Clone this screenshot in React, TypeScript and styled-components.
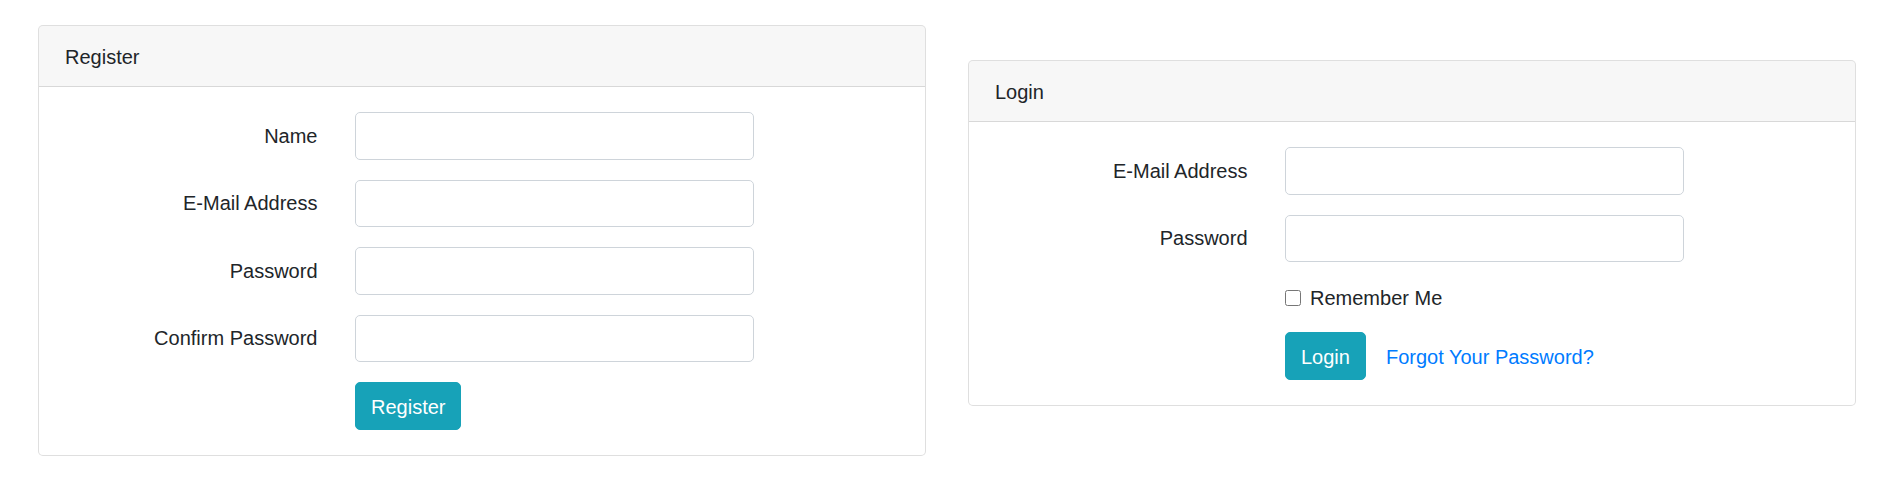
import React, { useState } from "react";
import styled, { createGlobalStyle } from "styled-components";

const GlobalStyle = createGlobalStyle`
  * { box-sizing: border-box; }
  body {
    margin: 0;
    background: #fff;
    color: #212529;
    font-family: "Liberation Sans", Arial, sans-serif;
    font-size: 20px;
    line-height: 1.5;
  }
`;

const Page = styled.div`
  display: flex;
  align-items: flex-start;
  gap: 42px;
  padding: 25px 0 0 38px;
`;

const Card = styled.div<{ $offset?: number }>`
  width: 888px;
  margin-top: ${(p) => p.$offset ?? 0}px;
  border: 1.25px solid rgba(0, 0, 0, 0.125);
  border-radius: 5px;
  background: #fff;
  overflow: hidden;
`;

const CardHeader = styled.div`
  padding: 16px 25px 14px 26px;
  background: rgba(0, 0, 0, 0.03);
  border-bottom: 1.25px solid rgba(0, 0, 0, 0.125);
`;

const CardBody = styled.form`
  padding: 25px;
`;

const Row = styled.div<{ $last?: boolean }>`
  display: grid;
  grid-template-columns: 291px 436.5px;
  margin: 0 -18.75px ${(p) => (p.$last ? 0 : 20)}px;
`;

const Label = styled.label`
  padding: 8.75px 18.75px 7.5px;
  text-align: right;
`;

const Field = styled.div<{ $col?: number }>`
  grid-column: ${(p) => p.$col ?? 2};
  padding: 0 18.75px;
  display: flex;
  align-items: center;
`;

const Input = styled.input`
  width: 100%;
  height: 47.5px;
  padding: 7.5px 15px;
  font: inherit;
  color: #495057;
  border: 1.25px solid #ced4da;
  border-radius: 5px;
  outline: none;
`;

const Check = styled.label`
  display: flex;
  align-items: center;
  gap: 9px;
  height: 30px;
  padding-top: 2px;
  cursor: pointer;

  input {
    width: 16px;
    height: 16px;
    margin: 0;
  }
`;

const Button = styled.button`
  font: inherit;
  color: #fff;
  background: #17a2b8;
  border: 1.25px solid #17a2b8;
  border-radius: 5px;
  padding: 8.5px 15px 6.5px;
  height: 47.5px;
  cursor: pointer;
`;

const LinkButton = styled.a`
  color: #007bff;
  text-decoration: none;
  padding: 8.5px 15px 6.5px;
  margin-left: 5px;
`;

const App: React.FC = () => {
  const [remember, setRemember] = useState(false);

  return (
    <>
      <GlobalStyle />
      <Page>
        <Card>
          <CardHeader>Register</CardHeader>
          <CardBody onSubmit={(e) => e.preventDefault()}>
            {["Name", "E-Mail Address", "Password", "Confirm Password"].map((l) => (
              <Row key={l}>
                <Label>{l}</Label>
                <Field>
                  <Input type={l.includes("Password") ? "password" : "text"} />
                </Field>
              </Row>
            ))}
            <Row $last>
              <Field>
                <Button type="submit">Register</Button>
              </Field>
            </Row>
          </CardBody>
        </Card>

        <Card $offset={35}>
          <CardHeader>Login</CardHeader>
          <CardBody onSubmit={(e) => e.preventDefault()}>
            <Row>
              <Label>E-Mail Address</Label>
              <Field>
                <Input type="email" />
              </Field>
            </Row>
            <Row>
              <Label>Password</Label>
              <Field>
                <Input type="password" />
              </Field>
            </Row>
            <Row>
              <Field>
                <Check>
                  <input
                    type="checkbox"
                    checked={remember}
                    onChange={(e) => setRemember(e.target.checked)}
                  />
                  Remember Me
                </Check>
              </Field>
            </Row>
            <Row $last>
              <Field>
                <Button type="submit">Login</Button>
                <LinkButton href="#">Forgot Your Password?</LinkButton>
              </Field>
            </Row>
          </CardBody>
        </Card>
      </Page>
    </>
  );
};

export default App;
